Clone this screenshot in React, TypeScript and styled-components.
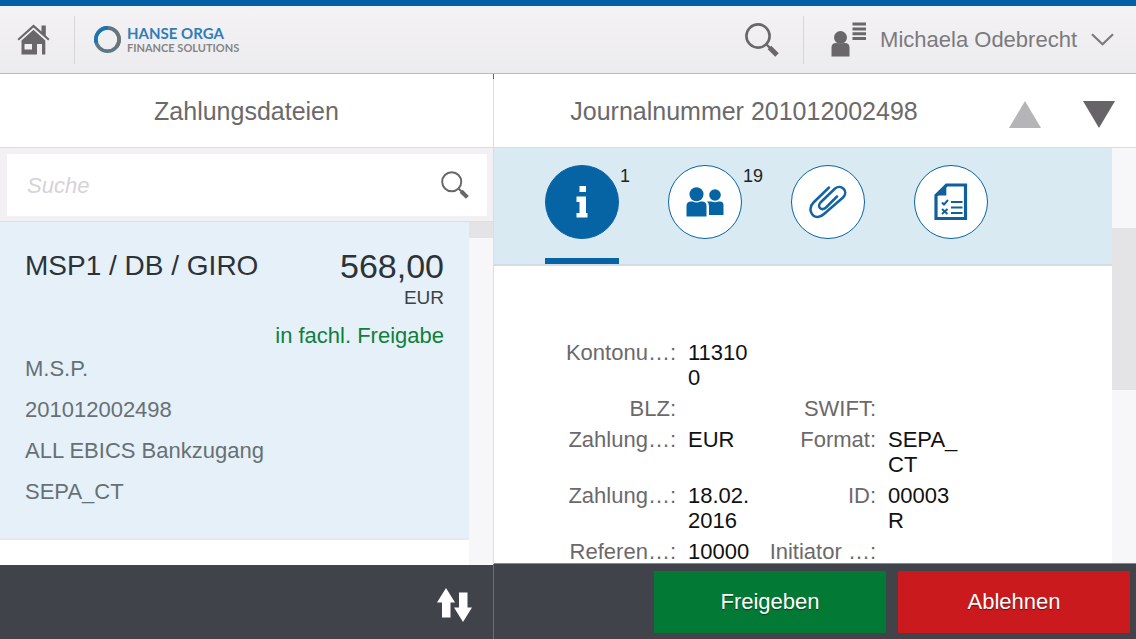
import React from "react";
import styled, { createGlobalStyle } from "styled-components";

const Global = createGlobalStyle`
  * { box-sizing: border-box; }
  body { margin: 0; background: #fff; font-family: "Liberation Sans", Arial, sans-serif; font-size: 22px; color: #6b696b; }
  button, input { font: inherit; color: inherit; border: 0; background: none; padding: 0; margin: 0; }
  button { cursor: pointer; }
  h1, h2, p, dl, dd, ul { margin: 0; padding: 0; font-weight: 400; list-style: none; }
  svg { display: block; }
`;

const Shell = styled.div`
  display: flex;
  flex-direction: column;
  height: 100vh;
  overflow: hidden;
`;

const TopBar = styled.header`
  display: flex;
  align-items: center;
  flex: none;
  height: 74px;
  padding: 0 22px 0 17px;
  border-top: 6px solid #0461a5;
  border-bottom: 1px solid #bbb9bc;
  background: linear-gradient(#f4f2f4, #ecebee);
`;

const Divider = styled.span`
  width: 1px;
  height: 48px;
  background: #d6d5d7;
`;

const Brand = styled.a`
  display: flex;
  align-items: center;
  gap: 5px;
  margin-left: 18px;
  text-decoration: none;
`;

const BrandText = styled.span`
  display: flex;
  flex-direction: column;
  font-family: Lato, sans-serif;
  font-weight: 700;
`;

const BrandName = styled.span`
  font-size: 15px;
  line-height: 16px;
  color: #2f7db8;
`;

const BrandLine = styled.span`
  font-size: 11px;
  line-height: 13px;
  color: #858587;
`;

const HomeButton = styled.button`
  margin-right: 24px;
`;

const HeaderSearch = styled.button`
  margin-left: auto;
  margin-right: 24px;
`;

const UserButton = styled.button`
  display: flex;
  align-items: center;
  gap: 14px;
  margin-left: 27px;
  color: #7c7a7d;
`;

const Panes = styled.main`
  display: grid;
  grid-template-columns: 434fr 566fr;
  flex: 1;
  min-height: 0;
`;

const Pane = styled.section<{ $divided?: boolean }>`
  display: flex;
  flex-direction: column;
  min-width: 0;
  min-height: 0;
  ${(p) =>
    p.$divided &&
    `border-left: 1px solid;
     border-image: linear-gradient(#35788c 0 6px, #dddcde 6px calc(100% - 76px), #6c6e73 calc(100% - 76px)) 1;`}
`;

const PaneHeader = styled.div`
  display: flex;
  align-items: center;
  flex: none;
  height: 74px;
  border-bottom: 1px solid #dddcde;
`;

const PaneTitle = styled.h1`
  flex: 1;
  text-align: center;
  font-size: 25px;
  line-height: 30px;
`;

const Pager = styled.div`
  display: flex;
  justify-content: flex-end;
  gap: 42px;
  width: 142px;
  padding-right: 21px;
  margin-top: 8px;
`;

const SearchBar = styled.form`
  flex: none;
  padding: 6px 6px 5px 7px;
  background: #f2f0f2;
  border-bottom: 1px solid #dfdfe1;
`;

const SearchBox = styled.div`
  display: flex;
  align-items: center;
  height: 62px;
  padding: 0 18px 0 20px;
  background: #fff;
`;

const SearchInput = styled.input`
  flex: 1;
  min-width: 0;
  padding-top: 2px;
  outline: 0;
  &::placeholder { color: #d6d2d8; font-style: italic; opacity: 1; }
`;

const Scroller = styled.div`
  display: flex;
  flex: 1;
  min-height: 0;
`;

const Content = styled.div`
  flex: 1;
  min-width: 0;
  overflow: hidden;
`;

const Track = styled.div<{ $lead: number }>`
  flex: none;
  width: 24px;
  padding-top: ${(p) => p.$lead}px;
  background: #f7f6f8;
`;

const Thumb = styled.div<{ $length: number }>`
  height: ${(p) => p.$length}px;
  background: #e4e3e5;
`;

const Item = styled.article`
  padding: 22px 25px 26px;
  background: #e6f0f9;
  border-bottom: 2px solid #e6eaec;
`;

const ItemHead = styled.div`
  display: flex;
  justify-content: space-between;
  line-height: 44px;
  color: #2c3338;
`;

const ItemTitle = styled.h2`
  font-size: 28px;
`;

const Amount = styled.span`
  font-size: 34px;
`;

const Currency = styled.p`
  font-size: 19px;
  line-height: 20px;
  text-align: right;
  color: #3c4347;
`;

const Status = styled.p`
  margin-top: 16px;
  line-height: 24px;
  text-align: right;
  color: #0f7f3c;
`;

const ItemLine = styled.li`
  line-height: 41px;
  color: #667075;
`;

const Footer = styled.footer<{ $tall?: boolean }>`
  display: flex;
  align-items: center;
  justify-content: flex-end;
  flex: none;
  gap: 12px;
  height: ${(p) => (p.$tall ? 76 : 74)}px;
  padding: ${(p) => (p.$tall ? "0 6px" : "6px 21px 0")};
  background: #40434a;
  ${(p) => p.$tall && "border-top: 1px solid #85878a;"}
`;

const Action = styled.button<{ $color: string }>`
  width: 232px;
  height: 62px;
  background: ${(p) => p.$color};
  color: #fff;
  text-shadow: 0 1px 1px rgba(0, 0, 0, 0.5);
`;

const TabStrip = styled.nav`
  display: flex;
  gap: 49px;
  height: 118px;
  padding: 17px 51px 0;
  background: #d9eaf2;
  border-bottom: 2px solid #d5dce1;
`;

const Tab = styled.button<{ $active?: boolean }>`
  position: relative;
  width: 74px;
  height: 99px;
  padding-bottom: 19px;
  border-bottom: 6px solid ${(p) => (p.$active ? "#0764a4" : "transparent")};
`;

const Disc = styled.span<{ $active?: boolean }>`
  display: flex;
  align-items: center;
  justify-content: center;
  width: 74px;
  height: 74px;
  border: 1px solid #0764a4;
  border-radius: 50%;
  background: ${(p) => (p.$active ? "#0764a4" : "#fff")};
`;

const Count = styled.span`
  position: absolute;
  left: 75px;
  top: 0;
  font-size: 18px;
  line-height: 22px;
  color: #222;
`;

const Details = styled.dl`
  display: grid;
  gap: 6px;
  padding: 74px 0 0 74px;
  line-height: 25px;
`;

const DetailRow = styled.div`
  display: grid;
  grid-template-columns: 108px 70px 106px 70px;
  column-gap: 12px;
`;

const Term = styled.dt`
  display: flex;
  justify-content: flex-end;
  white-space: nowrap;
`;

const Value = styled.dd`
  min-height: 25px;
  word-break: break-all;
  color: #111;
`;

const Magnifier = ({ size, thin }: { size: number; thin?: boolean }) => (
  <svg width={size} height={size} viewBox="0 0 34 34" fill="none" stroke="#69676a">
    <circle cx="13" cy="13" r="11.6" strokeWidth={thin ? 2.4 : 2.6} />
    <path d="M21.5 21.5l4 4" strokeWidth="2.4" />
    <path d="M24.5 24.5l7.5 7.5" strokeWidth="5" />
  </svg>
);

const HomeIcon = () => (
  <svg width="33" height="31" viewBox="0 0 33 31" fill="#69676a">
    <path d="M0.5 15L16.5 0.5 24.5 7.6V1.5h4.3v10L32.5 15l-1.3 1.5L16.5 3.4 1.8 16.5z" />
    <path fillRule="evenodd" d="M4.5 16.5L16.5 5.7 28.3 16.5V30.5h-3.3V20h-5v10.5H4.5zM7.5 20v5.5h7.5V20z" />
  </svg>
);

const RingLogo = () => (
  <svg width="29" height="29" viewBox="0 0 29 29" fill="none" strokeWidth="3.6">
    <circle cx="14.5" cy="14.5" r="11.6" stroke="#5d7885" />
    <path d="M3.4 18A11.6 11.6 0 0 1 15 2.9" stroke="#1975b5" />
    <path d="M21 4.9A11.6 11.6 0 0 1 23.5 21.8" stroke="#6b7478" />
  </svg>
);

const UserIcon = () => (
  <svg width="35" height="35" viewBox="0 0 35 35" fill="#69676a">
    <circle cx="9.5" cy="15.5" r="6.5" />
    <path d="M0.5 34.5V25.5q0-4.5 4.5-4.5h1.5q3 1.6 6 0H14q4.5 0 4.5 4.5v9z" />
    <path d="M21.5 0.5h13.5v3H21.5zM21.5 5.5h13.5v3H21.5zM21.5 10.3h13.5v3H21.5zM21.5 15h13.5v3H21.5z" />
  </svg>
);

const Chevron = () => (
  <svg width="23" height="13" viewBox="0 0 23 13" fill="none" stroke="#7c7a7d" strokeWidth="2.2">
    <path d="M1 1.2l10.5 10 10.5-10" />
  </svg>
);

const Triangle = ({ down }: { down?: boolean }) => (
  <svg width="32" height="27" viewBox="0 0 32 27">
    {down ? <path d="M0 0h32L16 27z" fill="#666467" /> : <path d="M0 27h32L16 0z" fill="#b5b4b6" />}
  </svg>
);

const SortIcon = () => (
  <svg width="35" height="34" viewBox="0 0 35 34" fill="#fff">
    <path d="M9 0l9 14.5h-4.5V29.5H5V14.5H0z" />
    <path d="M22 4.5h8.5v15H35L26 34l-9-14.5h5z" />
  </svg>
);

const InfoIcon = () => (
  <svg width="12" height="34" viewBox="0 0 12 34" fill="#fff">
    <path d="M3.5 1h6.5v6H3.5zM0.5 11.5h9.5V28h1.5v4.5H0.5V28h3V17h-3z" />
  </svg>
);

const PeopleIcon = () => (
  <svg width="38" height="30" viewBox="0 0 38 30" fill="#0764a4">
    <circle cx="10.5" cy="7.2" r="7" />
    <path d="M0.5 29.5V19q0-4.5 4.5-4.5h1.5q4 2 8 0H16q4.5 0 4.5 4.5v10.5z" />
    <circle cx="29" cy="8" r="5.8" />
    <path d="M21 14.5h4.5q3.5 1.5 7 0H34q3.5 0 3.5 3.5v10H23v-9q0-3-2-4.5z" />
  </svg>
);

const ClipIcon = () => (
  <svg width="38" height="34" viewBox="0 0 38 34" fill="none" stroke="#1464a1" strokeWidth="2.5" strokeLinecap="round">
    <path d="M20 2.5L4.5 17.5C-1.5 23.5 2.5 32.5 9 32q3.2-0.3 6-3L34 12.5C40 6.5 32.5-1.5 26 3.5L11.5 17.5C7.5 21.8 12.5 26.5 17 22.5L28 11.5" />
  </svg>
);

const ChecklistIcon = () => (
  <svg width="34" height="38" viewBox="0 0 34 38" fill="none" stroke="#0f609c">
    <path d="M2 12.5V35.5H31.5V2H12.5z" strokeWidth="3.2" />
    <path d="M1 12.5L12.3 1V12.5z" fill="#0f609c" stroke="none" />
    <path d="M17 19h11.5M17 24.5h11.5M17 30h11.5" strokeWidth="2.2" />
    <path d="M8 19.5l2 2 4-4.5M8 26l5.5 5M13.5 26L8 31" strokeWidth="1.9" />
  </svg>
);

const tabs = [
  { name: "Info", count: "1", icon: <InfoIcon />, active: true },
  { name: "Personen", count: "19", icon: <PeopleIcon /> },
  { name: "Anlagen", icon: <ClipIcon /> },
  { name: "Protokoll", icon: <ChecklistIcon /> },
];

const details: [string, string][][] = [
  [["Kontonu…", "113100"]],
  [["BLZ", ""], ["SWIFT", ""]],
  [["Zahlung…", "EUR"], ["Format", "SEPA_CT"]],
  [["Zahlung…", "18.02.2016"], ["ID", "00003R"]],
  [["Referen…", "10000"], ["Initiator …", ""]],
];

const itemLines = ["M.S.P.", "201012002498", "ALL EBICS Bankzugang", "SEPA_CT"];

export default function App() {
  return (
    <>
      <Global />
      <Shell>
        <TopBar>
          <HomeButton aria-label="Startseite"><HomeIcon /></HomeButton>
          <Divider />
          <Brand href="#">
            <RingLogo />
            <BrandText>
              <BrandName>HANSE ORGA</BrandName>
              <BrandLine>FINANCE SOLUTIONS</BrandLine>
            </BrandText>
          </Brand>
          <HeaderSearch aria-label="Suchen"><Magnifier size={34} /></HeaderSearch>
          <Divider />
          <UserButton>
            <UserIcon />
            <span>Michaela Odebrecht</span>
            <Chevron />
          </UserButton>
        </TopBar>
        <Panes>
          <Pane>
            <PaneHeader><PaneTitle>Zahlungsdateien</PaneTitle></PaneHeader>
            <SearchBar>
              <SearchBox>
                <SearchInput type="text" placeholder="Suche" aria-label="Suche" />
                <button type="button" aria-label="Suche starten"><Magnifier size={28} thin /></button>
              </SearchBox>
            </SearchBar>
            <Scroller>
              <Content>
                <Item>
                  <ItemHead>
                    <ItemTitle>MSP1 / DB / GIRO</ItemTitle>
                    <Amount>568,00</Amount>
                  </ItemHead>
                  <Currency>EUR</Currency>
                  <Status>in fachl. Freigabe</Status>
                  <ul>{itemLines.map((line) => <ItemLine key={line}>{line}</ItemLine>)}</ul>
                </Item>
              </Content>
              <Track $lead={0}><Thumb $length={16} /></Track>
            </Scroller>
            <Footer><button aria-label="Sortieren"><SortIcon /></button></Footer>
          </Pane>
          <Pane $divided>
            <PaneHeader>
              <PaneTitle>Journalnummer 201012002498</PaneTitle>
              <Pager>
                <button aria-label="Vorheriger Eintrag"><Triangle /></button>
                <button aria-label="Nächster Eintrag"><Triangle down /></button>
              </Pager>
            </PaneHeader>
            <Scroller>
              <Content>
                <TabStrip>
                  {tabs.map((tab) => (
                    <Tab key={tab.name} $active={tab.active} aria-label={tab.name}>
                      <Disc $active={tab.active}>{tab.icon}</Disc>
                      {tab.count && <Count>{tab.count}</Count>}
                    </Tab>
                  ))}
                </TabStrip>
                <Details>
                  {details.map((row, index) => (
                    <DetailRow key={index}>
                      {row.map(([term, value]) => (
                        <React.Fragment key={term}>
                          <Term>{term}:</Term>
                          <Value>{value}</Value>
                        </React.Fragment>
                      ))}
                    </DetailRow>
                  ))}
                </Details>
              </Content>
              <Track $lead={80}><Thumb $length={162} /></Track>
            </Scroller>
            <Footer $tall>
              <Action $color="#027a35">Freigeben</Action>
              <Action $color="#cb1a1d">Ablehnen</Action>
            </Footer>
          </Pane>
        </Panes>
      </Shell>
    </>
  );
}
